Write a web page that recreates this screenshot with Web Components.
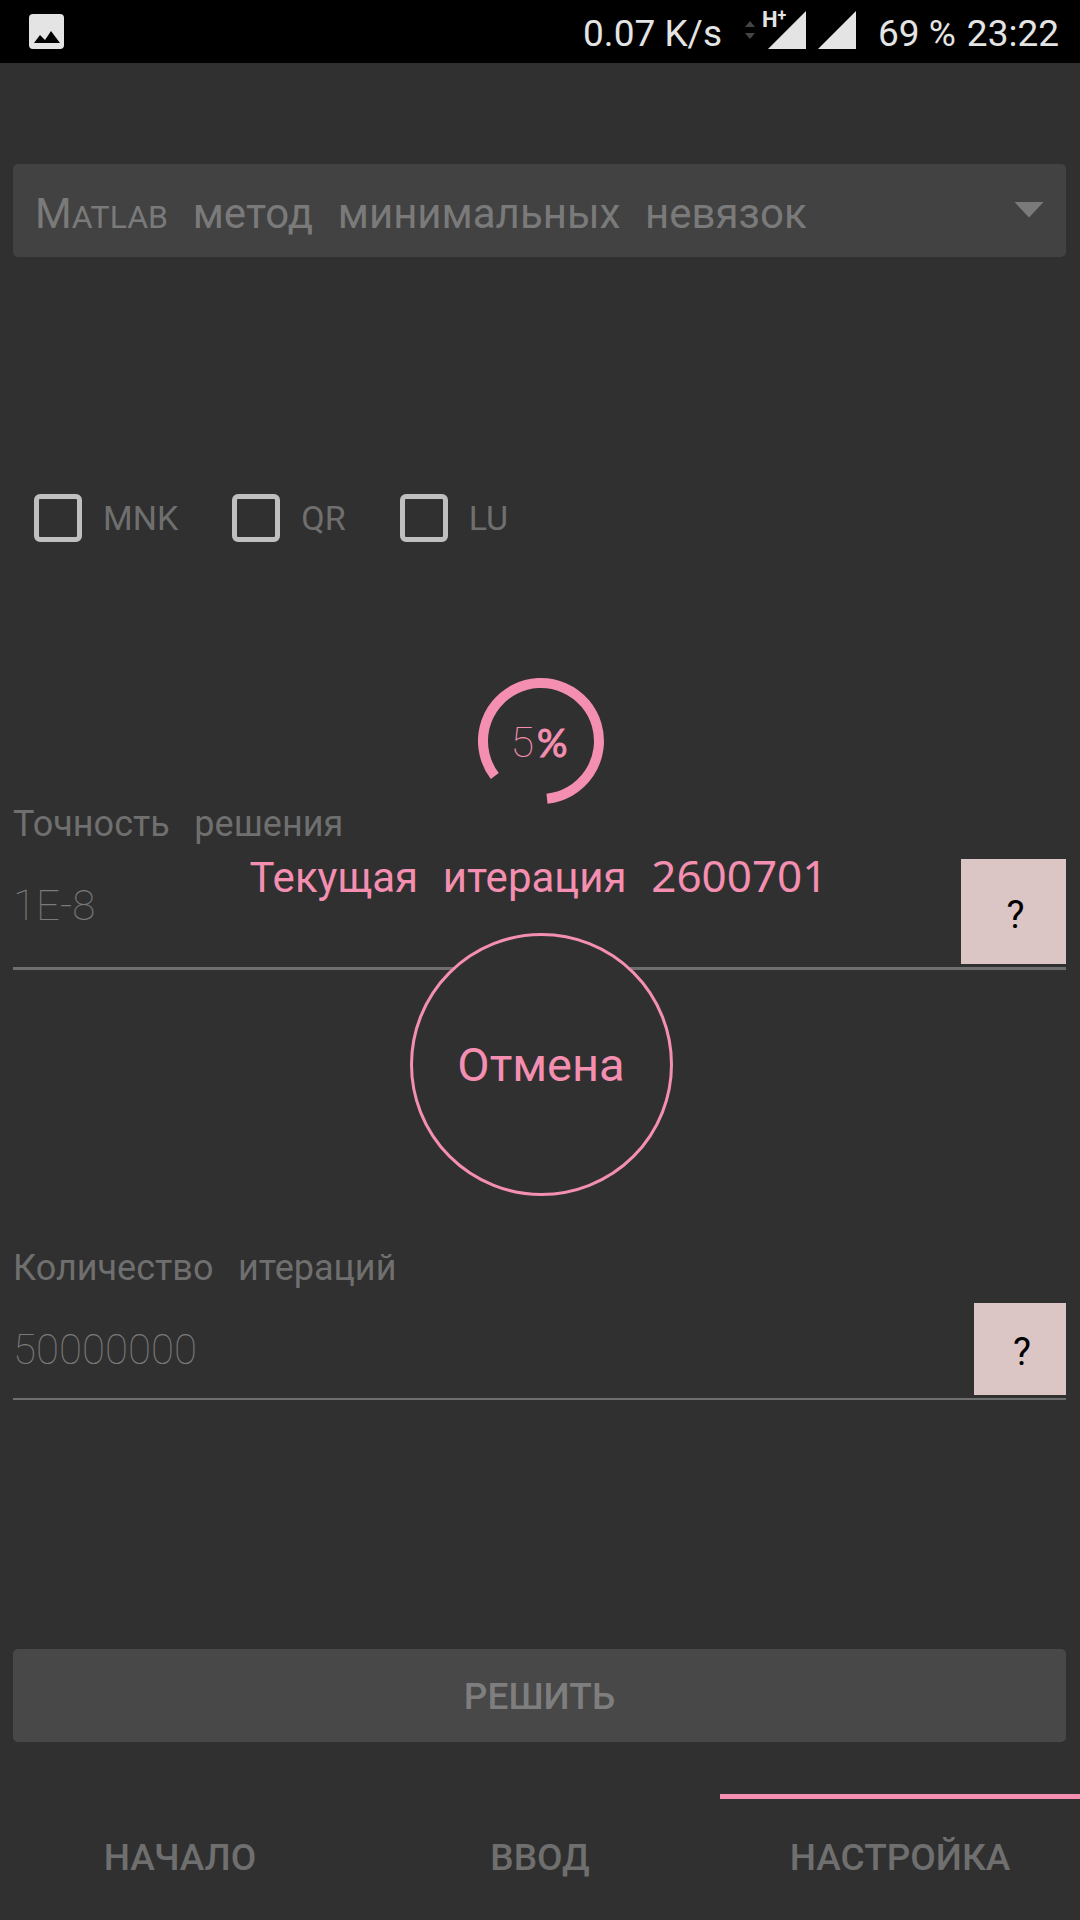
<!DOCTYPE html>
<html lang="ru">
<head>
<meta charset="utf-8">
<meta name="viewport" content="width=device-width, initial-scale=1">
<title>Настройка</title>
<style>
  :root {
    --bg: #303030;
    --muted: #6f6f6f;
    --pink: #f48fb1;
    --rose: #dcc5c5;
  }
  html, body { margin: 0; background: var(--bg); }
  body { font-family: Roboto, "Noto Sans", sans-serif; color: var(--muted); }
</style>
</head>
<body>
<solver-app></solver-app>
<script>
const define = (name, html, setup) => customElements.define(name, class extends HTMLElement {
  connectedCallback() {
    if (this.shadowRoot) return;
    const t = document.createElement('template');
    t.innerHTML = html;
    this.attachShadow({ mode: 'open' }).append(t.content.cloneNode(true));
    if (setup) setup(this, this.shadowRoot);
  }
});

define('status-bar', `
<style>
  :host { display: flex; align-items: center; justify-content: space-between; height: 63px; box-sizing: border-box;
    padding: 0 21px 0 29px; background: #000; color: #e4e4e4; font-size: 37px; line-height: 44px; }
  svg { display: block; }
  .right { display: flex; align-items: center; padding-top: 5px; }
  .net { display: flex; align-items: center; padding: 0 22px; margin-top: -8px; }
  .cell { position: relative; padding-left: 12px; }
  .kind { position: absolute; left: 6px; top: 0; font: bold 22px/18px Roboto, sans-serif; }
  .kind sup { font-size: 16px; line-height: 0; vertical-align: 6px; }
  .clock { display: flex; gap: 11px; }
</style>
<svg width="35" height="35" viewBox="0 0 35 35" role="img" aria-label="Снимок">
  <rect width="35" height="35" rx="4" fill="#e4e4e4"/>
  <path d="M5 29l6-8 5 5 6-9 9 12z" fill="#000"/>
</svg>
<div class="right">
  <span>0.07 K/s</span>
  <div class="net">
    <svg width="12" height="20" viewBox="0 0 12 20" fill="#444"><path d="M1 7l5-6 5 6zM1 13h10l-5 6z"/></svg>
    <div class="cell"><span class="kind">H<sup>+</sup></span>
      <svg width="38" height="38" viewBox="0 0 38 38" fill="#e4e4e4"><path d="M0 38L38 0v38z"/></svg></div>
    <div class="cell"><svg width="38" height="38" viewBox="0 0 38 38" fill="#e4e4e4"><path d="M0 38L38 0v38z"/></svg></div>
  </div>
  <div class="clock"><span>69 %</span> <span>23:22</span></div>
</div>`);

define('method-select', `
<style>
  :host { display: block; }
  select, select button { font: inherit; color: inherit; }
  select { appearance: base-select; display: flex; align-items: center; width: 100%; height: 93px; box-sizing: border-box;
    margin: 0; border: 0; border-radius: 5px; padding: 0 22px; background: #424242; color: #7a7a7a;
    font-size: 42px; line-height: 50px; }
  select::picker-icon { content: ""; width: 30px; height: 16px; margin-bottom: 2px; background: #7a7a7a; clip-path: polygon(0 0, 100% 0, 50% 100%); }
  .caps { font-size: 32px; text-transform: uppercase; }
  selectedcontent { display: block; padding-top: 10px; }
</style>
<select aria-label="Метод"><button><selectedcontent></selectedcontent></button>
<option>M<span class="caps">atlab</span>&emsp13; метод&emsp13; минимальных&emsp13; невязок</option></select>`);

define('check-item', `
<style>
  :host { display: block; }
  label { display: flex; align-items: center; gap: 21px; font: 34px/48px Roboto, sans-serif; }
  input { appearance: none; margin: 0; width: 48px; height: 48px; border: 5px solid #bfbfbf; border-radius: 6px; }
  input:checked { background: var(--pink); }
</style>
<label><input type="checkbox"><span><slot></slot></span></label>`);

define('number-field', `
<style>
  :host { display: block; border-bottom: var(--line, 2px) solid var(--muted); padding-bottom: 3px; }
  label { display: block; font-size: 36px; line-height: 44px; margin-bottom: 13px; }
  .row { display: flex; align-items: flex-start; }
  input { flex: 1; min-width: 0; height: 92px; box-sizing: border-box; margin: 0; padding: 0; border: 0; background: none; outline: 0;
    color: #7a7a7a; font: 100 42px/50px Roboto, sans-serif; }
  button { width: var(--size, 92px); height: var(--size, 92px); border: 0; margin: 0; padding: 6px 0 0 4px; background: var(--rose);
    color: #000; font: 400 38px/44px Roboto, sans-serif; }
</style>
<label for="v"><slot></slot></label>
<div class="row"><input id="v" type="text"><button type="button" aria-label="Справка">?</button></div>`,
(el, root) => { root.querySelector('input').value = el.getAttribute('value'); });

define('solve-button', `
<style>
  :host { display: block; }
  button { width: 100%; height: 93px; border: 0; border-radius: 5px; margin: 0; padding: 3px 0 0; background: #484848; color: #7e7e7e;
    font: 500 37px/44px Roboto, sans-serif; }
</style>
<button type="button"><slot></slot></button>`);

define('tab-bar', `
<style>
  :host { display: flex; }
  ::slotted(a) { flex: 1; box-sizing: border-box; padding: 37px 0 40px; border-top: 5px solid transparent; text-align: center;
    color: var(--muted); text-decoration: none; font-size: 37px; line-height: 44px; font-weight: 500; }
  ::slotted(a[aria-current]) { border-top-color: var(--pink); }
</style>
<slot></slot>`);

define('progress-ring', `
<style>
  :host { display: grid; place-items: center; width: 126px; height: 126px; }
  svg, span { grid-area: 1 / 1; }
  span { font: 100 43px/50px Roboto, sans-serif; padding: 2px 4px 0 0; }
  b { font: 400 38px/44px Lato, sans-serif; margin-left: 3px; -webkit-text-stroke: 1px currentColor; }
</style>
<svg width="126" height="126" viewBox="-63 -63 126 126" fill="none" stroke="currentColor" stroke-width="10">
  <path d="M6 57.7A58 58 0 1 0 -46.2 35.1"/>
</svg>
<span>5<b>%</b></span>`);

define('progress-overlay', `
<style>
  :host { position: absolute; inset: 0; display: flex; flex-direction: column; align-items: center; justify-content: center;
    box-sizing: border-box; padding: 0 0 46px 2px; color: var(--pink); }
  p { margin: 46px 5px 28px 0; font-size: 42px; line-height: 54px; }
  .n { font-family: "Noto Sans", sans-serif; font-size: 44px; line-height: 50px; }
  button { width: 263px; height: 263px; border: 3px solid var(--pink); border-radius: 50%; padding: 0; margin: 0; background: var(--bg);
    color: inherit; font: 400 47px/56px Roboto, sans-serif; }
</style>
<progress-ring></progress-ring>
<p>Текущая&emsp13; итерация&emsp13; <span class="n">2600701</span></p>
<button type="button">Отмена</button>`);

define('solver-app', `
<style>
  :host { display: flex; flex-direction: column; min-height: 100vh; position: relative; }
  main { flex: 1; display: flex; flex-direction: column; padding: 101px 14px 51px 13px; }
  .checks { display: flex; gap: 54px; padding: 237px 21px 260px; }
  .accuracy { --size: 105px; --line: 3px; }
  .iterations { margin: 276px 0 249px; }
</style>
<status-bar></status-bar>
<main>
  <method-select></method-select>
  <div class="checks"><check-item>MNK</check-item><check-item>QR</check-item><check-item>LU</check-item></div>
  <number-field class="accuracy" value="1E-8">Точность&emsp13;&emsp13;решения</number-field>
  <number-field class="iterations" value="50000000">Количество&emsp13;&emsp13;итераций</number-field>
  <solve-button>РЕШИТЬ</solve-button>
</main>
<tab-bar><a href="#start">НАЧАЛО</a><a href="#input">ВВОД</a><a href="#settings" aria-current="page">НАСТРОЙКА</a></tab-bar>
<progress-overlay></progress-overlay>`);
</script>
</body>
</html>
